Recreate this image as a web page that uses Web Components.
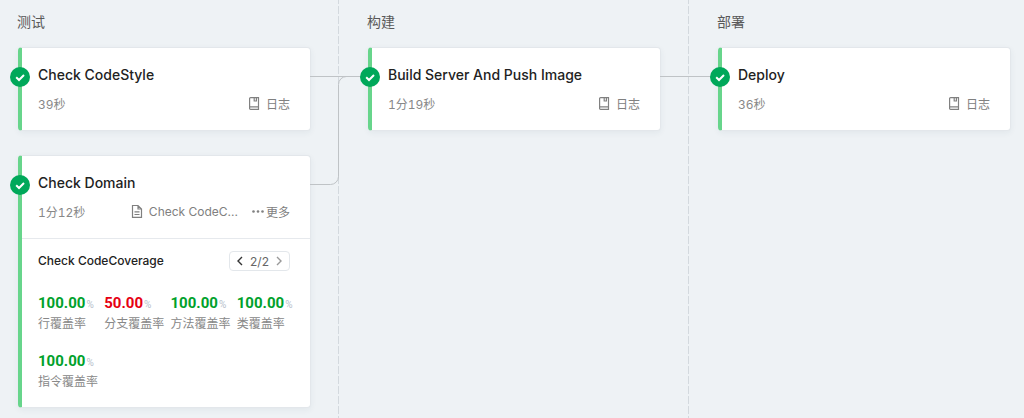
<!DOCTYPE html>
<html lang="zh-CN">
<head>
<meta charset="utf-8">
<meta name="viewport" content="width=device-width, initial-scale=1">
<title>Pipeline</title>
<style>
body {
  margin: 0;
  min-height: 100vh;
  display: flex;
  background: #eef2f5;
  color: #222;
  font-family: Inter, "Noto Sans CJK SC", sans-serif;
}
pipeline-board { flex: 1; }
</style>
</head>
<body>
<pipeline-board>
  <pipeline-stage name="测试" position="first">
    <pipeline-job name="Check CodeStyle" time="39秒" link="straight">
      <job-action slot="actions" icon="log">日志</job-action>
    </pipeline-job>
    <pipeline-job name="Check Domain" time="1分12秒" link="elbow">
      <job-action slot="actions" icon="file">Check CodeC...</job-action>
      <job-action slot="actions" icon="more">更多</job-action>
      <coverage-report slot="report" name="Check CodeCoverage" page="2/2">
        <coverage-metric value="100.00">行覆盖率</coverage-metric>
        <coverage-metric value="50.00" low>分支覆盖率</coverage-metric>
        <coverage-metric value="100.00">方法覆盖率</coverage-metric>
        <coverage-metric value="100.00">类覆盖率</coverage-metric>
        <coverage-metric value="100.00">指令覆盖率</coverage-metric>
      </coverage-report>
    </pipeline-job>
  </pipeline-stage>
  <pipeline-stage name="构建">
    <pipeline-job name="Build Server And Push Image" time="1分19秒" link="straight">
      <job-action slot="actions" icon="log">日志</job-action>
    </pipeline-job>
  </pipeline-stage>
  <pipeline-stage name="部署" position="last">
    <pipeline-job name="Deploy" time="36秒">
      <job-action slot="actions" icon="log">日志</job-action>
    </pipeline-job>
  </pipeline-stage>
</pipeline-board>

<script>
class BaseElement extends HTMLElement {
  connectedCallback() {
    if (this.shadowRoot) return;
    this.attachShadow({ mode: "open" }).innerHTML = this.render();
  }
  attr(name) { return this.getAttribute(name) || ""; }
}

customElements.define("pipeline-board", class extends BaseElement {
  render() {
    return `<style>:host { display: flex; }</style><slot></slot>`;
  }
});

customElements.define("pipeline-stage", class extends BaseElement {
  render() {
    return `
      <style>
        :host {
          display: block;
          flex: 1 1 0;
          min-width: 0;
          padding: 12px 28px 10px 29px;
          background: repeating-linear-gradient(#d3d9de 0 4px, transparent 4px 6px, #d3d9de 6px 10px) right top / 1px 100% no-repeat;
        }
        :host([position="first"]) { padding-left: 18px; }
        :host([position="last"]) { padding-right: 13px; background: none; }
        h2 { margin: 0 0 15px; font-size: 14px; line-height: 20px; font-weight: 400; color: #595959; text-indent: -1px; }
        .jobs { display: flex; flex-direction: column; gap: 24px; }
      </style>
      <h2>${this.attr("name")}</h2>
      <div class="jobs"><slot></slot></div>`;
  }
});

const links = {
  straight: `<svg width="57" height="109" viewBox="0 0 57 109" aria-hidden="true"><path d="M0 108.5H57"/></svg>`,
  elbow: `<svg width="57" height="109" viewBox="0 0 57 109" aria-hidden="true"><path d="M0 108.5H20.5a8 8 0 0 0 8-8V8.500a8 8 0 0 1 8-8H57"/></svg>`
};

customElements.define("pipeline-job", class extends BaseElement {
  render() {
    return `
      <style>
        :host {
          display: block;
          position: relative;
          box-sizing: border-box;
          background: #fff;
          border: 1px solid #e3e7eb;
          border-left: 4px solid #67d58b;
          border-radius: 4px;
          box-shadow: 0 2px 6px rgba(40, 60, 90, .06);
        }
        .head { padding: 16px 20px 17px 16px; }
        h3 { margin: 0; font-size: 14px; line-height: 22px; font-weight: 500; color: #222; }
        .row { display: flex; align-items: center; height: 20px; margin-top: 7px; }
        time { flex: 1; font-size: 12px; font-variant-numeric: tabular-nums; color: #888; }
        .actions { display: flex; gap: 14px; }
        .status { position: absolute; left: -12px; top: 19px; width: 20px; height: 20px; z-index: 1; }
        .link { position: absolute; left: 100%; top: -80px; pointer-events: none; }
        .link svg { display: block; fill: none; stroke: #bfc3c6; }
      </style>
      <svg class="status" viewBox="0 0 20 20" role="img" aria-label="成功">
        <circle cx="10" cy="10" r="10" fill="#00a85a"/>
        <path d="M6.200 10.300l2.800 2.700 5-5" fill="none" stroke="#fff" stroke-width="2"/>
      </svg>
      <div class="head">
        <h3>${this.attr("name")}</h3>
        <div class="row"><time>${this.attr("time")}</time><div class="actions"><slot name="actions"></slot></div></div>
      </div>
      <slot name="report"></slot>
      <div class="link">${links[this.attr("link")] || ""}</div>`;
  }
});

const icons = {
  log: `<svg width="12" height="14" viewBox="0 0 12 14" aria-hidden="true"><path d="M1.600 2.600a1 1 0 0 1 1-1h7.900v11.800H2.600a1 1 0 0 1-1-1zM1.600 10.900h8.900M6.200 2v3h2.200V2" fill="none" stroke="currentColor" stroke-width="1.200"/></svg>`,
  file: `<svg width="12" height="14" viewBox="0 0 12 14" aria-hidden="true"><path d="M1.500 1.500h5.500l3.500 3.500v8.300h-9zM7 1.500v3.500h3.500M3.500 7.800h5M3.500 10.500h5" fill="none" stroke="currentColor" stroke-width="1.200"/></svg>`,
  more: `<svg width="12" height="14" viewBox="0 0 12 14" aria-hidden="true"><g fill="currentColor"><circle cx="1.500" cy="7.500" r="1.300"/><circle cx="6" cy="7.500" r="1.300"/><circle cx="10.500" cy="7.500" r="1.300"/></g></svg>`
};

customElements.define("job-action", class extends BaseElement {
  render() {
    return `
      <style>
        :host { display: block; }
        button {
          display: flex; align-items: center; gap: 6px;
          height: 20px; padding: 0; border: 0; background: none;
          font: inherit; font-size: 12px; color: #808080; white-space: nowrap; cursor: pointer;
        }
        :host([icon="more"]) button { gap: 2px; }
      </style>
      <button type="button">${icons[this.attr("icon")]}<slot></slot></button>`;
  }
});

customElements.define("coverage-report", class extends BaseElement {
  render() {
    return `
      <style>
        :host { display: block; border-top: 1px solid #e6e9ed; padding: 12px 7px 16px 16px; }
        header { display: flex; align-items: center; justify-content: space-between; margin: 0 13px 20px 0; }
        h4 { margin: 0; font-size: 12px; line-height: 20px; font-weight: 500; color: #222; }
        nav {
          display: flex; align-items: center; box-sizing: border-box; height: 20px;
          border: 1px solid #e3e7eb; border-radius: 4px; font-size: 12px; color: #666;
        }
        nav button { display: flex; padding: 0 7px; border: 0; background: none; color: #333; }
        nav button:disabled { color: #999; }
        nav svg { fill: none; stroke: currentColor; stroke-width: 1.400; }
        .metrics { display: grid; grid-template-columns: repeat(4, 1fr); row-gap: 16px; }
      </style>
      <header>
        <h4>${this.attr("name")}</h4>
        <nav aria-label="分页">
          <button type="button" aria-label="上一页"><svg width="6" height="10" viewBox="0 0 6 10"><path d="M5 1L1 5l4 4"/></svg></button>
          <span>${this.attr("page")}</span>
          <button type="button" aria-label="下一页" disabled><svg width="6" height="10" viewBox="0 0 6 10"><path d="M1 1l4 4-4 4"/></svg></button>
        </nav>
      </header>
      <div class="metrics"><slot></slot></div>`;
  }
});

customElements.define("coverage-metric", class extends BaseElement {
  render() {
    return `
      <style>
        :host { display: block; min-width: 0; white-space: nowrap; }
        .value { line-height: 24px; height: 24px; color: #00a12b; font-family: Roboto, sans-serif; font-size: 15px; font-weight: 700; }
        :host([low]) .value { color: #e60012; }
        small { margin-left: 1px; font-size: 10px; font-weight: 400; color: #b8bfcc; }
        .label { font-size: 12px; line-height: 18px; color: #888; }
      </style>
      <div class="value">${this.attr("value")}<small>%</small></div>
      <div class="label"><slot></slot></div>`;
  }
});
</script>
</body>
</html>
